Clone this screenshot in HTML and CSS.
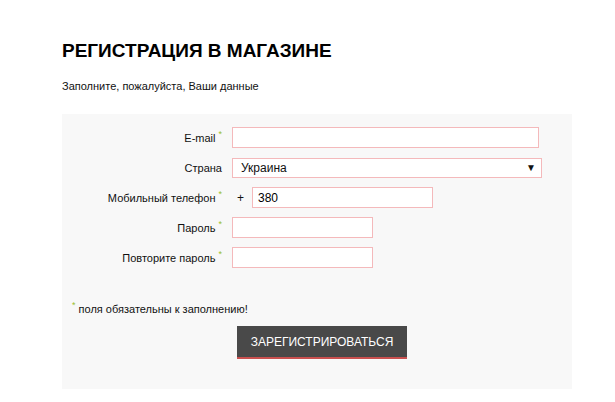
FILE: index.html
```html
<!DOCTYPE html>
<html>
<head>
  <meta charset="utf-8">
  <title>Регистрация в магазине</title>
  <link rel="stylesheet" href="styles.css">
</head>
<body>
  <div class="page">
    <h1 class="title">РЕГИСТРАЦИЯ В МАГАЗИНЕ</h1>
    <p class="intro">Заполните, пожалуйста, Ваши данные</p>

    <form class="regForm">
      <div class="row">
        <label class="lbl">E-mail<span class="req">*</span></label>
        <input class="inp wide" type="text">
      </div>
      <div class="row">
        <label class="lbl">Страна</label>
        <div class="sel">
          <span>Украина</span>
          <span class="arrow">&#9660;</span>
        </div>
      </div>
      <div class="row">
        <label class="lbl">Мобильный телефон<span class="req">*</span></label>
        <div class="phone">
          <span class="plus">+</span>
          <input class="inp phoneInp" type="text" value="380">
        </div>
      </div>
      <div class="row">
        <label class="lbl">Пароль<span class="req">*</span></label>
        <input class="inp short" type="password">
      </div>
      <div class="row">
        <label class="lbl">Повторите пароль<span class="req">*</span></label>
        <input class="inp short" type="password">
      </div>

      <p class="note"><span class="req">*</span> поля обязательны к заполнению!</p>

      <div class="btnRow">
        <button type="button" class="btn">ЗАРЕГИСТРИРОВАТЬСЯ</button>
      </div>
    </form>
  </div>
</body>
</html>
```

FILE: styles.css
```css
body {
  margin: 0;
  padding: 0;
  background: #fff;
  font-family: "Liberation Sans", Arial, sans-serif;
  color: #111;
}

.page {
  padding: 40px 0 0 62px;
  width: 510px;
}

.title {
  margin: 0;
  font-size: 19px;
  font-weight: bold;
  line-height: 22px;
  color: #000;
}

.intro {
  margin: 17px 0 0;
  font-size: 11px;
  line-height: 14px;
}

.regForm {
  margin-top: 21px;
  background: #f8f8f8;
  padding: 13px 0 30px;
  height: 232px;
}

.row {
  display: flex;
  align-items: center;
  height: 21px;
  margin-bottom: 9px;
}

.lbl {
  width: 160px;
  margin-right: 10px;
  text-align: right;
  font-size: 11px;
  color: #111;
}

.req {
  color: #9bbf2f;
  font-size: 9px;
  vertical-align: top;
  margin-left: 3px;
  position: relative;
  top: -3px;
}

.inp {
  box-sizing: border-box;
  height: 21px;
  border: 1px solid #f4b9bb;
  background: #fff;
  font-family: "Liberation Sans", Arial, sans-serif;
  font-size: 12px;
  padding: 0 5px;
  outline: none;
}

.wide {
  width: 307px;
}

.short {
  width: 141px;
}

.sel {
  box-sizing: border-box;
  width: 310px;
  height: 20px;
  border: 1px solid #f4b9bb;
  background: #fff;
  display: flex;
  align-items: center;
  justify-content: space-between;
  padding: 0 5px 0 8px;
  font-size: 12px;
}

.arrow {
  font-size: 10px;
}

.phone {
  display: flex;
  align-items: center;
}

.plus {
  box-sizing: border-box;
  width: 20px;
  padding-left: 5px;
  font-size: 12px;
}

.phoneInp {
  width: 181px;
}

.note {
  margin: 35px 0 0 10px;
  font-size: 11px;
}

.note .req {
  margin: 0;
}

.btnRow {
  padding-left: 175px;
  margin-top: 11px;
}

.btn {
  width: 170px;
  height: 33px;
  background: #494949;
  color: #fff;
  border: none;
  border-bottom: 2px solid #c9504f;
  font-family: "Liberation Sans", Arial, sans-serif;
  font-size: 12px;
  padding: 0;
  cursor: pointer;
}
```
